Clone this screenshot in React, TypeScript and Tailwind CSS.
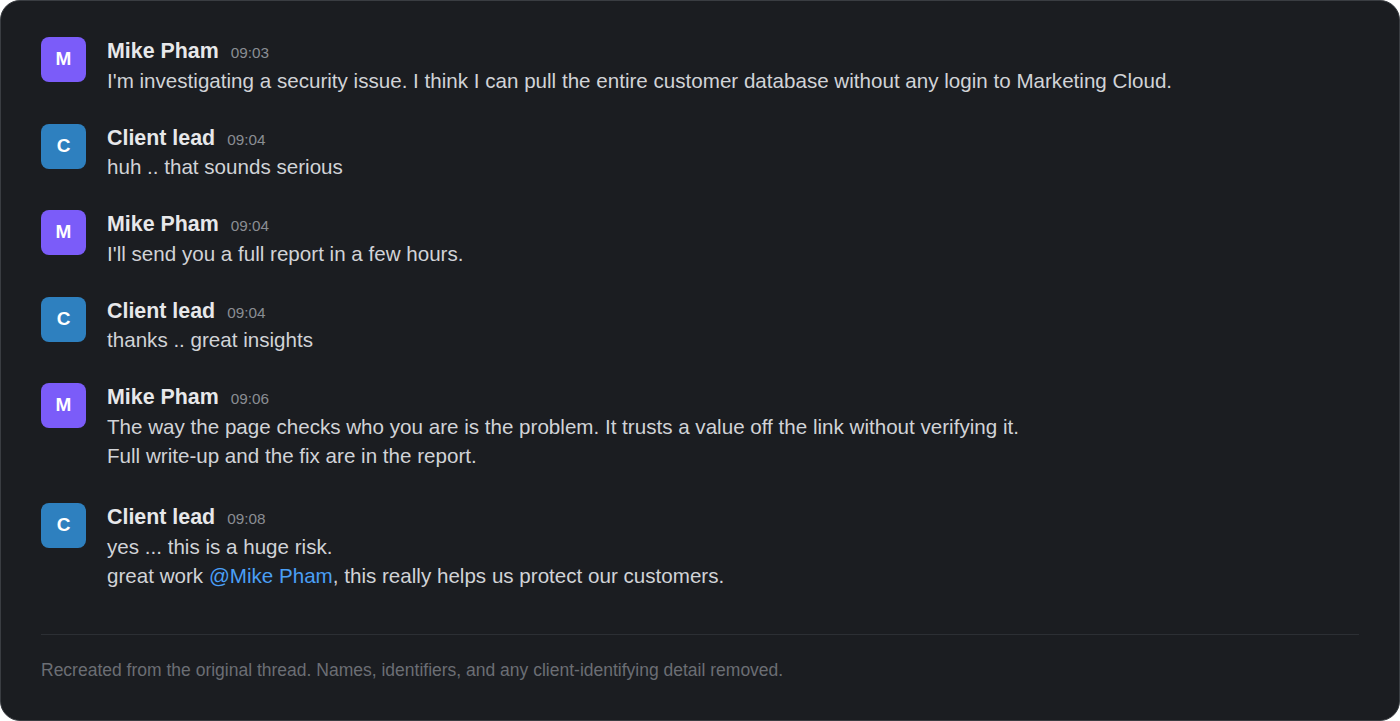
import React from "react";

type Msg = {
  name: string;
  time: string;
  avatar: "M" | "C";
  lines: React.ReactNode[];
};

const messages: Msg[] = [
  {
    name: "Mike Pham",
    time: "09:03",
    avatar: "M",
    lines: [
      "I'm investigating a security issue. I think I can pull the entire customer database without any login to Marketing Cloud.",
    ],
  },
  { name: "Client lead", time: "09:04", avatar: "C", lines: ["huh .. that sounds serious"] },
  { name: "Mike Pham", time: "09:04", avatar: "M", lines: ["I'll send you a full report in a few hours."] },
  { name: "Client lead", time: "09:04", avatar: "C", lines: ["thanks .. great insights"] },
  {
    name: "Mike Pham",
    time: "09:06",
    avatar: "M",
    lines: [
      "The way the page checks who you are is the problem. It trusts a value off the link without verifying it.",
      "Full write-up and the fix are in the report.",
    ],
  },
  {
    name: "Client lead",
    time: "09:08",
    avatar: "C",
    lines: [
      "yes ... this is a huge risk.",
      <>
        great work <span className="text-[#4a9ff5]">@Mike Pham</span>, this really helps us protect our customers.
      </>,
    ],
  },
];

function Row({ m }: { m: Msg }) {
  const multi = m.lines.length > 1;
  return (
    <div className={`flex gap-[21px] ${multi ? "mb-[4.5px]" : ""}`}>
      <div
        className={`w-[45px] h-[45px] shrink-0 rounded-[8px] flex items-center justify-center text-white font-bold text-[19px] ${
          m.avatar === "M" ? "bg-[#7b5cf9]" : "bg-[#2e80bf]"
        }`}
      >
        {m.avatar}
      </div>
      <div className="flex flex-col">
        <div className="flex items-baseline gap-[12px] h-[26px] leading-[28px] overflow-visible">
          <span className="text-[21.4px] font-bold text-[#e7e8ea]">{m.name}</span>
          <span className="text-[15.3px] text-[#8a8d93]">{m.time}</span>
        </div>
        <div className="mt-[2.5px] text-[20.6px] leading-[29px] text-[#d1d3d7]">
          {m.lines.map((l, i) => (
            <div key={i}>{l}</div>
          ))}
        </div>
      </div>
    </div>
  );
}

export default function App() {
  return (
    <div
      className="w-[1400px] h-[721px] bg-white"
      style={{ fontFamily: '"Liberation Sans", Arial, sans-serif' }}
    >
      <div className="h-full rounded-[20px] border border-[#3a3d42] bg-[#1b1d21] px-10 pt-9 flex flex-col">
        <div className="flex flex-col gap-[29px]">
          {messages.map((m, i) => (
            <Row key={i} m={m} />
          ))}
        </div>
        <div className="mt-[40px] border-t border-[#2c2f34]" />
        <div className="mt-[25px] text-[17.5px] leading-[20px] text-[#6b6e74]">
          Recreated from the original thread. Names, identifiers, and any client-identifying detail removed.
        </div>
      </div>
    </div>
  );
}
